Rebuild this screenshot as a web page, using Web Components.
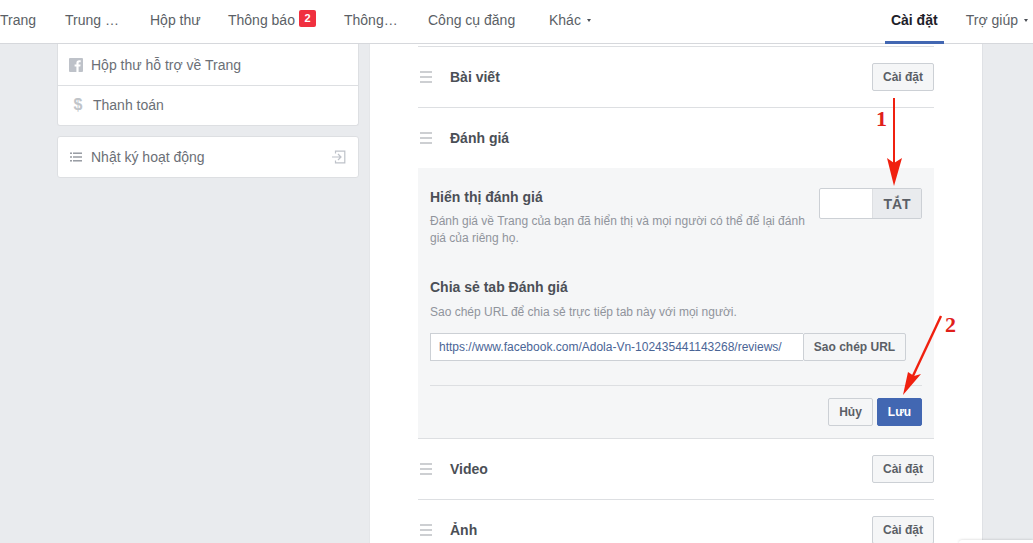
<!DOCTYPE html>
<html>
<head>
<meta charset="utf-8">
<title>Cài đặt</title>
<style>
  html, body { margin: 0; height: 543px; overflow: hidden; }
  body { background: #e9ebee; font-family: "Liberation Sans", Arial, sans-serif; position: relative; }
</style>
</head>
<body>
<fb-topbar>
  <fb-tab style="width:65px">Trang</fb-tab>
  <fb-tab style="width:85px">Trung …</fb-tab>
  <fb-tab style="width:78px">Hộp thư</fb-tab>
  <fb-tab style="width:116px" badge="2">Thông báo</fb-tab>
  <fb-tab style="width:84px">Thông…</fb-tab>
  <fb-tab style="width:121px">Công cụ đăng</fb-tab>
  <fb-tab caret>Khác</fb-tab>
  <fb-tab slot="right" active style="width:59px">Cài đặt</fb-tab>
  <fb-tab slot="right" caret style="margin-left:22px">Trợ giúp</fb-tab>
</fb-topbar>

<fb-page>
  <div slot="side">
    <fb-side-card flat>
      <fb-side-item icon="fb" style="height:41px">Hộp thư hỗ trợ về Trang</fb-side-item>
      <fb-side-item icon="dollar" style="height:38px;padding-bottom:1px">Thanh toán</fb-side-item>
    </fb-side-card>
    <fb-side-card>
      <fb-side-item icon="list" enter>Nhật ký hoạt động</fb-side-item>
    </fb-side-card>
  </div>

  <fb-setting-row label="Bài viết"><fb-button>Cài đặt</fb-button></fb-setting-row>
  <fb-setting-row label="Đánh giá"></fb-setting-row>
  <fb-review-panel></fb-review-panel>
  <fb-setting-row label="Video"><fb-button>Cài đặt</fb-button></fb-setting-row>
  <fb-setting-row label="Ảnh"><fb-button>Cài đặt</fb-button></fb-setting-row>
</fb-page>

<fb-annotations></fb-annotations>
<fb-corner></fb-corner>

<script>
class FbTopbar extends HTMLElement {
	constructor() {
		super();
		this.attachShadow({ mode: 'open' });
		this.shadowRoot.innerHTML = `
			<style>
				:host { display: flex; justify-content: space-between; height: 43px; background: #fff; border-bottom: 1px solid #d6d8dc; box-sizing: content-box; }
				div { display: flex; }
				.right { padding-right: 5px; }
			</style>
			<div><slot></slot></div>
			<div class="right"><slot name="right"></slot></div>
		`;
	}
}

class FbTab extends HTMLElement {
	constructor() {
		super();
		this.attachShadow({ mode: 'open' });
		const badge = this.getAttribute('badge');
		this.shadowRoot.innerHTML = `
			<style>
				:host { display: flex; align-items: center; box-sizing: border-box; height: 44px; padding-bottom: 5px; font-size: 14px; color: #5b5f66; white-space: nowrap; position: relative; }
				:host([active]) { font-weight: bold; color: #1d2129; justify-content: center; }
				:host([active])::after { content: ""; position: absolute; left: 0; right: 0; bottom: 0; height: 3px; background: #4267b2; }
				.badge { margin-left: 4px; margin-top: -3px; width: 17px; height: 17px; background: #f0303f; color: #fff; border-radius: 2px; font-size: 11px; font-weight: bold; display: flex; align-items: center; justify-content: center; }
				.caret { margin-left: 6px; margin-top: 1px; width: 0; height: 0; border: 2.5px solid transparent; border-top: 3px solid #4b4f56; border-bottom: 0; }
			</style>
			<slot></slot>
			${badge ? `<span class="badge">${badge}</span>` : ''}
			${this.hasAttribute('caret') ? '<span class="caret"></span>' : ''}
		`;
	}
}

class FbPage extends HTMLElement {
	constructor() {
		super();
		this.attachShadow({ mode: 'open' });
		this.shadowRoot.innerHTML = `
			<style>
				:host { display: flex; padding-left: 57px; height: 499px; overflow: hidden; }
				.side { width: 302px; margin-right: 11px; flex: none; }
				.main { width: 612px; box-sizing: border-box; background: #fff; padding: 2px 48px 0; box-shadow: 1px 0 0 #dfe1e5, -1px 0 0 #e4e6e9; }
				.inner { border-top: 1px solid #dddfe2; }
			</style>
			<div class="side"><slot name="side"></slot></div>
			<div class="main"><div class="inner"><slot></slot></div></div>
		`;
	}
}

class FbSideCard extends HTMLElement {
	constructor() {
		super();
		this.attachShadow({ mode: 'open' });
		this.shadowRoot.innerHTML = `
			<style>
				:host { display: block; background: #fff; border: 1px solid #dddfe2; border-radius: 3px; margin-bottom: 10px; }
				:host([flat]) { border-top: 0; border-radius: 0 0 3px 3px; }
			</style>
			<slot></slot>
		`;
	}
}

class FbSideItem extends HTMLElement {
	constructor() {
		super();
		this.attachShadow({ mode: 'open' });
		const icons = {
			fb: `<svg width="14" height="14" viewBox="0 0 14 14"><rect width="14" height="14" rx="1" fill="#bec2c9"/><path d="M9.6 14V8.6h1.7l.3-2.1h-2V5.2c0-.6.2-1 1-1h1.1V2.3c-.2 0-.8-.1-1.6-.1-1.6 0-2.7 1-2.7 2.8v1.5H5.6v2.1h1.8V14z" fill="#fff"/></svg>`,
			dollar: `<span class="dollar">$</span>`,
			list: `<svg width="14" height="14" viewBox="0 0 14 14" fill="#90949c"><rect x="1" y="2.5" width="2" height="1.4"/><rect x="4" y="2.5" width="9" height="1.4"/><rect x="1" y="6.3" width="2" height="1.4"/><rect x="4" y="6.3" width="9" height="1.4"/><rect x="1" y="10.1" width="2" height="1.4"/><rect x="4" y="10.1" width="9" height="1.4"/></svg>`
		};
		const enter = `<svg class="enter" width="14" height="14" viewBox="0 0 14 14" fill="none" stroke="#bec2c9" stroke-width="1.2"><path d="M3.5 3.5V1.2h9.3v11.6H3.5v-2.3"/><path d="M0 7h8.5M6 4l3 3-3 3"/></svg>`;
		const isDollar = this.getAttribute('icon') === 'dollar';
		this.shadowRoot.innerHTML = `
			<style>
				:host { display: flex; align-items: center; height: 40px; padding: 0 11px; font-size: 14px; color: #6b6f76; border-bottom: 1px solid #dddfe2; }
				:host(:last-child) { border-bottom: 0; }
				.icon { width: 14px; height: 14px; margin-right: 8px; display: flex; align-items: center; justify-content: center; flex: none; ${isDollar ? 'margin-left:2px;' : ''} }
				.dollar { color: #c0c4c9; font-size: 16px; font-weight: bold; }
				.enter { margin-left: auto; margin-right: 1px; }
			</style>
			<span class="icon">${icons[this.getAttribute('icon')] || ''}</span>
			<slot></slot>
			${this.hasAttribute('enter') ? enter : ''}
		`;
	}
}

class FbSettingRow extends HTMLElement {
	constructor() {
		super();
		this.attachShadow({ mode: 'open' });
		this.shadowRoot.innerHTML = `
			<style>
				:host { display: flex; align-items: center; height: 60px; border-bottom: 1px solid #dddfe2; font-size: 14px; font-weight: bold; color: #4b4f56; }
				:host([label="Đánh giá"]) { border-bottom: 0; }
				.drag { width: 12px; height: 12px; margin: 0 18px 0 2px; flex: none; border-top: 2px solid #cdcfd2; border-bottom: 2px solid #cdcfd2; box-sizing: border-box; position: relative; }
				.drag::after { content: ""; position: absolute; left: 0; right: 0; top: 3px; height: 2px; background: #cdcfd2; }
				.label { flex: 1; }
			</style>
			<span class="drag"></span>
			<span class="label">${this.getAttribute('label')}</span>
			<slot></slot>
		`;
	}
}

class FbButton extends HTMLElement {
	constructor() {
		super();
		this.attachShadow({ mode: 'open' });
		this.shadowRoot.innerHTML = `
			<style>
				:host { display: inline-flex; align-items: center; justify-content: center; box-sizing: border-box; height: 28px; padding: 0 10px; background: #f5f6f7; border: 1px solid #ccd0d5; border-radius: 2px; font-size: 12px; font-weight: bold; color: #5b5f66; white-space: nowrap; }
				:host([primary]) { background: #4267b2; border-color: #4267b2; color: #fff; }
			</style>
			<slot></slot>
		`;
	}
}

class FbReviewPanel extends HTMLElement {
	constructor() {
		super();
		this.attachShadow({ mode: 'open' });
		this.shadowRoot.innerHTML = `
			<style>
				:host { display: block; box-sizing: border-box; height: 271px; padding: 20px 12px 0; background: #f5f6f7; border-bottom: 1px solid #dddfe2; }
				h3 { margin: 0; font-size: 14px; line-height: 18px; color: #4b4f56; }
				p { margin: 0; font-size: 12px; line-height: 17px; color: #90949c; }
				.top { display: flex; justify-content: space-between; height: 90px; }
				.top p { width: 380px; margin-top: 7px; }
				.toggle { display: flex; width: 103px; height: 31px; box-sizing: border-box; border: 1px solid #ccd0d5; border-radius: 2px; background: #fff; flex: none; }
				.toggle i { width: 53px; box-sizing: border-box; border-right: 1px solid #dddfe2; }
				.toggle b { flex: 1; display: flex; align-items: center; justify-content: center; background: #e9ebee; font-size: 14px; color: #5b5f66; }
				.share p { margin-top: 8px; }
				.url { display: flex; margin-top: 12px; }
				.input { width: 373px; height: 28px; box-sizing: border-box; padding-left: 8px; display: flex; align-items: center; background: #fff; border: 1px solid #ccd0d5; border-right: 0; font-size: 12px; color: #4a6596; }
				.foot { margin-top: 24px; border-top: 1px solid #dddfe2; padding-top: 12px; display: flex; justify-content: flex-end; gap: 4px; }
				.foot fb-button { width: 45px; }
			</style>
			<div class="top">
				<div>
					<h3>Hiển thị đánh giá</h3>
					<p>Đánh giá về Trang của bạn đã hiển thị và mọi người có thể để lại đánh giá của riêng họ.</p>
				</div>
				<div class="toggle"><i></i><b>TẮT</b></div>
			</div>
			<div class="share">
				<h3>Chia sẻ tab Đánh giá</h3>
				<p>Sao chép URL để chia sẻ trực tiếp tab này với mọi người.</p>
				<div class="url">
					<div class="input">https://www.facebook.com/Adola-Vn-102435441143268/reviews/</div>
					<fb-button style="width:103px">Sao chép URL</fb-button>
				</div>
			</div>
			<div class="foot">
				<fb-button>Hủy</fb-button>
				<fb-button primary>Lưu</fb-button>
			</div>
		`;
	}
}

// red hand-drawn marks laid over the screenshot
class FbAnnotations extends HTMLElement {
	constructor() {
		super();
		this.attachShadow({ mode: 'open' });
		this.shadowRoot.innerHTML = `
			<style>
				:host { position: absolute; inset: 0; pointer-events: none; }
				span { position: absolute; font: bold 22px/26px "Liberation Serif", serif; color: #e0201a; }
				svg { position: absolute; left: 0; top: 0; }
			</style>
			<svg width="1033" height="543">
				<path d="M894 98V172" stroke="#f0200f" stroke-width="2" fill="none"/>
				<path d="M887 158L894 163L902 158L894 186z" fill="#f0200f"/>
				<path d="M941 316L912 378" stroke="#f0200f" stroke-width="2.4" fill="none"/>
				<path d="M908 372L914 376L921 374L903 395z" fill="#f0200f"/>
			</svg>
			<span style="left:876px;top:106px">1</span>
			<span style="left:945px;top:312px">2</span>
		`;
	}
}

class FbCorner extends HTMLElement {
	constructor() {
		super();
		this.attachShadow({ mode: 'open' });
		this.shadowRoot.innerHTML = `
			<style>
				:host { position: absolute; left: 959px; top: 540px; width: 74px; height: 3px; background: #fff; border-radius: 3px 0 0 0; box-shadow: 0 0 3px rgba(0,0,0,.2); }
			</style>
		`;
	}
}

customElements.define('fb-topbar', FbTopbar);
customElements.define('fb-tab', FbTab);
customElements.define('fb-page', FbPage);
customElements.define('fb-side-card', FbSideCard);
customElements.define('fb-side-item', FbSideItem);
customElements.define('fb-setting-row', FbSettingRow);
customElements.define('fb-button', FbButton);
customElements.define('fb-review-panel', FbReviewPanel);
customElements.define('fb-annotations', FbAnnotations);
customElements.define('fb-corner', FbCorner);
</script>
</body>
</html>
